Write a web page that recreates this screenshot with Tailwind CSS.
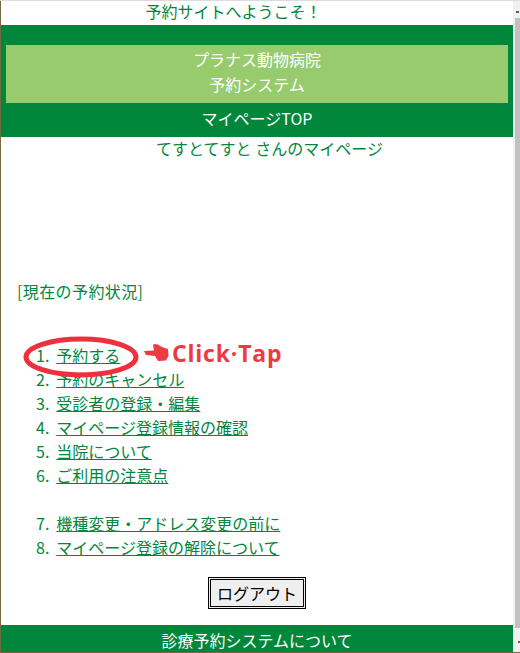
<!DOCTYPE html>
<html lang="ja">
<head>
<meta charset="UTF-8">
<title>マイページTOP</title>
<script src="https://cdn.jsdelivr.net/npm/@tailwindcss/browser@4"></script>
</head>
<body class="bg-white overflow-hidden">
<div class="flex w-[520px] h-[653px] flex-col font-['Noto_Sans_CJK_JP','Noto_Sans',sans-serif] text-[16px] text-[#00873c]">
  <div class="h-px bg-[#dcdcdc]"></div>
  <div class="flex flex-1 min-h-0">
    <div class="w-px bg-[#6f6b3c]"></div>
    <main class="flex-1 min-w-0 flex flex-col">
      <p class="h-6 leading-[21px] text-center pr-[47px]">予約サイトへようこそ！</p>
      <header class="bg-[#00873c] h-[112px] pt-5 text-white text-center">
        <div class="mx-[5px] h-[58px] bg-[#97cb6e] leading-[25px] pt-[2px]">
          <p>プラナス動物病院</p>
          <p>予約システム</p>
        </div>
        <p class="leading-[30px]">マイページTOP</p>
      </header>
      <p class="h-[24px] leading-[22px] text-center pl-[25px]">てすとてすと さんのマイページ</p>

      <p class="mt-[118px] pl-4 leading-[24px] tracking-[0.4px]">[現在の予約状況]</p>

      <div class="relative mt-[40px]">
        <ol class="pl-[35px] leading-[24px]">
          <li class="flex gap-[7px]"><span>1.</span><a href="#" class="underline">予約する</a></li>
          <li class="flex gap-[7px]"><span>2.</span><a href="#" class="underline">予約のキャンセル</a></li>
          <li class="flex gap-[7px]"><span>3.</span><a href="#" class="underline">受診者の登録・編集</a></li>
          <li class="flex gap-[7px]"><span>4.</span><a href="#" class="underline">マイページ登録情報の確認</a></li>
          <li class="flex gap-[7px]"><span>5.</span><a href="#" class="underline">当院について</a></li>
          <li class="flex gap-[7px]"><span>6.</span><a href="#" class="underline">ご利用の注意点</a></li>
          <li class="flex gap-[7px] mt-6"><span>7.</span><a href="#" class="underline">機種変更・アドレス変更の前に</a></li>
          <li class="flex gap-[7px]"><span>8.</span><a href="#" class="underline">マイページ登録の解除について</a></li>
        </ol>
        <svg class="absolute left-[20px] top-[-9px]" width="124" height="48" viewBox="0 0 124 48">
          <ellipse cx="60" cy="23" rx="55" ry="18" fill="none" stroke="#ee2f3c" stroke-width="5"/>
        </svg>
        <div class="absolute left-[143px] top-[-5px] flex items-center gap-[3px] text-[#ee3a42]">
          <svg width="25" height="20" viewBox="0 0 25 20">
            <path d="M0 8 L10 7.5 L9 2 L10 1 L14 1.5 L18 4 L24 6 L24.5 13 L22 17.5 L14 18 L11 13 L2 12 Z" fill="#ee3a42"/>
          </svg>
          <span class="font-['Open_Sans',sans-serif] font-bold text-[23px] leading-[30px] tracking-[0.8px]">Click·Tap</span>
        </div>
      </div>

      <div class="mt-[18px] flex justify-center">
        <button class="w-[98px] h-[32px] border-[3px] border-double border-black bg-[#efefef] text-black text-[16px] leading-none">ログアウト</button>
      </div>

      <footer class="mt-auto h-[27px] bg-[#00873c] text-white text-center leading-[30px] overflow-hidden">診療予約システムについて</footer>
    </main>
    <div class="relative w-[7px] bg-[#f0f0f0] flex flex-col pl-[2px]">
      <div class="h-[17px]"></div>
      <div class="h-[610px] bg-[#c1c1c1]"></div>
      <div class="absolute left-[3px] top-[10px] w-[3px] h-[2px] bg-[#606060]"></div>
      <div class="absolute left-[5px] top-[640px] w-[2px] h-[2px] bg-[#606060]"></div>
    </div>
  </div>
  <div class="h-px bg-[#6f6b3c]"></div>
</div>
</body>
</html>
